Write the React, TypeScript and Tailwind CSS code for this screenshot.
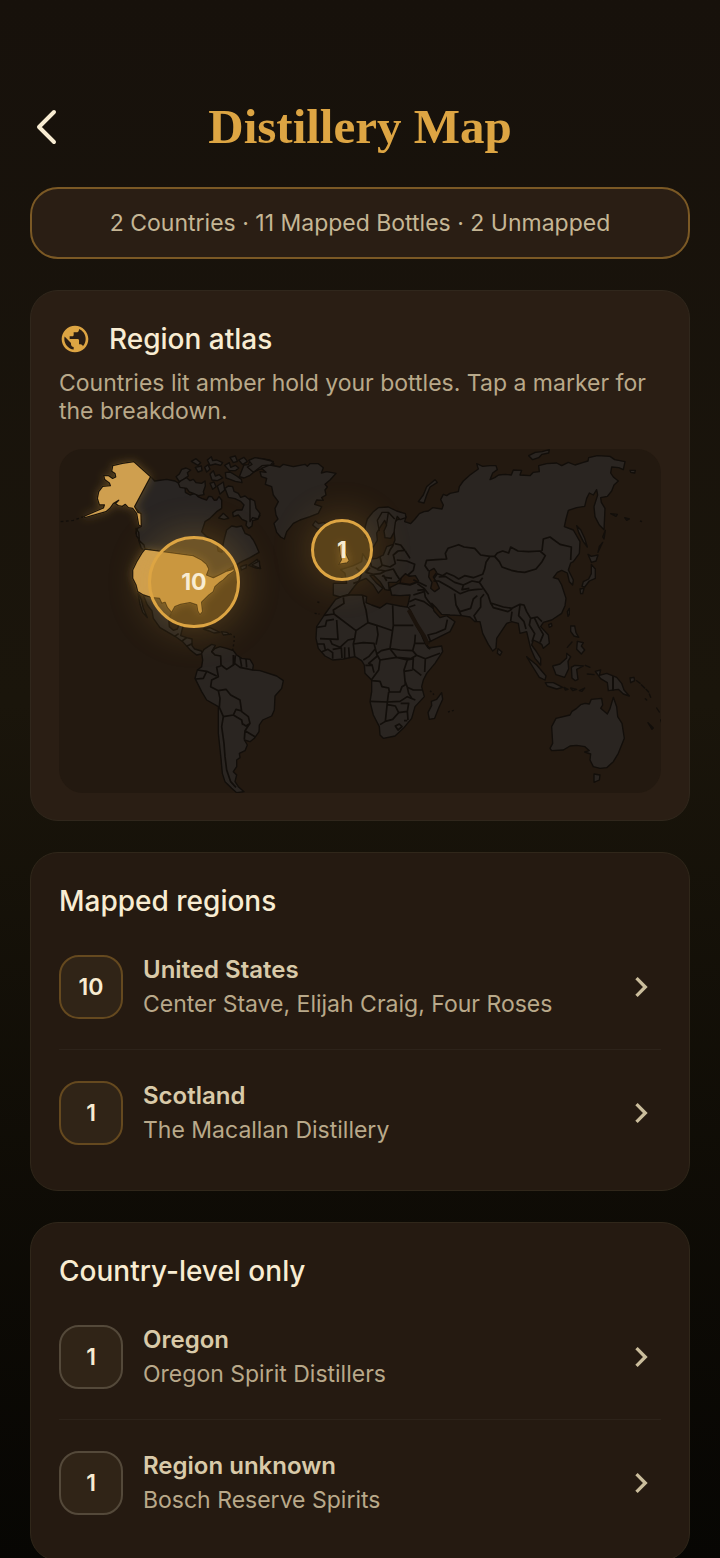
import { MdChevronRight, MdPublic } from "react-icons/md"

interface Region {
  name: string
  detail: string
  count: number
}

interface RegionListProps {
  title: string
  regions: Region[]
  badgeClassName: string
}

const mappedRegions: Region[] = [
  { name: "United States", detail: "Center Stave, Elijah Craig, Four Roses", count: 10 },
  { name: "Scotland", detail: "The Macallan Distillery", count: 1 },
]

const countryLevelRegions: Region[] = [
  { name: "Oregon", detail: "Oregon Spirit Distillers", count: 1 },
  { name: "Region unknown", detail: "Bosch Reserve Spirits", count: 1 },
]

function WorldMap() {
  return (
    <svg viewBox="-3 12 1806 1032" className="block size-full" role="img" aria-label="World map">
      <defs>
        <filter id="lit" x="-30%" y="-30%" width="160%" height="160%">
          <feDropShadow dx="0" dy="0" stdDeviation="12" floodColor="#d9a441" floodOpacity="0.3" />
        </filter>
      </defs>

      <g fill="#2a2521" stroke="#120e0a" strokeWidth="4" strokeLinejoin="round">
        {/* Canada */}
        <path
          fill="#292523"
          d="M272 95 284 108 320 103 345 108 360 117 375 122 376 142 390 150 405 145 414 155 425 160 440 165 446 154 455 155 463 166 470 165 477 155 485 165 485 190 470 200 450 220 435 230 425 260 440 275 470 290 474 318 486 322 489 300 492 285 500 255 515 243 530 246 545 243 555 265 570 272 580 285 590 305 597 322 570 338 545 350 525 362 497 378 478 392 445 398 430 360 400 345 255 312 240 290 228 265 232 250 243 245 241 206 224 185Z"
        />
        <path d="M228 250 236 262 238 282 230 274ZM236 285 252 300 256 318 244 310Z" />
        {/* Arctic islands */}
        <g transform="translate(330 15)">
          <path d="M25 100 35 88 50 83 60 92 70 88 78 98 95 100 105 93 106 108 100 125 102 134 85 137 70 130 58 126 50 115 30 112Z" />
          <path d="M18 80 28 72 35 58 48 54 62 60 52 68 55 78 40 88 28 95Z" />
          <path d="M64 34 78 26 92 38 84 46 74 40ZM76 52 94 48 96 62 84 66ZM104 52 114 44 120 58 110 66ZM112 30 124 20 128 32 140 30 158 38 152 46 136 42 120 46ZM120 72 130 62 136 78 148 74 158 84 142 92 126 90ZM120 100 132 96 138 110 128 118ZM142 108 160 96 164 120 150 132ZM164 46 178 38 182 52 196 46 206 54 196 62 178 62ZM166 68 180 66 200 78 214 88 216 98 196 94 180 88 168 84ZM180 22 196 18 202 34 190 38ZM206 30 222 22 232 34 218 44Z" />
          <path d="M215 62 222 45 236 44 240 30 262 25 300 30 312 42 290 54 268 58 252 66 240 76 222 84 208 80Z" />
          <path d="M165 115 175 108 188 110 192 124 205 130 212 142 225 138 240 150 250 165 246 180 258 194 270 196 262 208 248 212 246 228 236 235 228 226 230 214 216 208 205 195 190 200 188 188 200 180 216 180 222 165 212 154 195 146 175 142Z" />
          <path d="M146 204 160 190 176 205 162 208ZM236 346 262 328 272 356 258 354ZM212 350 230 344 228 354 214 360Z" />
        </g>
        {/* Mexico, Central America, Caribbean */}
        <path d="M250 450 275 458 298 460 305 475 315 472 322 485 335 503 326 520 328 545 340 556 352 552 358 538 370 538 366 555 362 572 380 578 396 582 396 602 404 612 424 618 428 626 410 630 390 614 370 592 345 574 300 548 280 520 276 498 262 480Z" />
        <path d="M234 442 244 464 250 490 262 518 248 502 240 478Z" />
        <path d="M430 552 450 548 480 562 462 564 448 558ZM484 560 500 562 508 568 490 570Z" />
        <path fill="none" strokeDasharray="6 7" d="M510 566 523 575 522 592 518 615" />
        <path fill="none" strokeWidth="5" d="M344 574 356 566M366 588 380 578M380 604 396 596" />

        {/* South America */}
        <g transform="translate(0 495)">
          <path d="M425 130 432 118 455 103 466 106 455 125 464 116 480 110 500 115 520 122 530 135 545 145 570 148 580 165 578 180 600 182 650 198 670 212 665 235 645 258 643 300 635 318 608 330 598 345 597 365 583 385 570 395 553 390 562 405 555 422 538 430 540 443 530 450 530 470 520 485 530 495 525 515 535 530 552 545 530 548 515 535 495 515 487 490 483 445 475 370 475 290 440 270 425 245 405 205 412 180 425 170 428 150Z" />
          <path
            fill="none"
            strokeWidth="5"
            d="M455 125 465 135 482 138 483 165 500 178 520 165 520 135M482 168 470 172 475 200 455 210 452 230 475 242 498 238 512 255 540 270 545 305 565 320 570 340 558 348 545 340M413 180 440 184 430 205 408 207M440 184 470 198M475 242 480 265 478 292 490 320 520 315 528 298 545 303M490 320 485 350 492 400 495 440 500 480 512 515 528 532M520 315 545 330 548 345M570 340 555 362 553 388M555 362 585 380M526 136 524 160 540 172 578 180M540 142 545 170M558 147 560 172M500 178 524 162"
          />
        </g>

        {/* Greenland, Iceland */}
        <g transform="translate(570 0)">
          <path d="M30 80 48 82 34 70 60 60 90 66 100 58 130 65 165 58 172 64 180 56 205 56 220 68 214 84 230 80 258 85 240 105 225 118 232 126 225 135 228 150 215 158 220 166 200 165 194 178 215 185 205 205 180 215 150 225 130 235 110 260 103 282 92 276 80 262 72 235 84 222 78 210 75 190 85 170 70 150 65 125 46 118 50 100 34 95Z" />
          <path d="M-8 66 6 58-4 46 15 38 40 42 70 50 62 60 36 62 10 82Z" />
          <path d="M188 240 196 228 206 236 222 232 232 242 218 252 202 252Z" />
          <path d="M0 160 14 168 18 190 30 205 24 222 8 218 0 230ZM5 360 28 348 30 370Z" />
          <path d="M505 170 520 150 530 125 555 104 562 112 540 126 530 150 522 174Z" />
        </g>

        {/* Eurasia */}
        <path d="M1038 215 1034 230 1052 236 1065 222 1078 206 1092 200 1105 198 1118 188 1146 192 1150 180 1142 164 1150 148 1160 152 1170 145 1195 140 1198 125 1210 108 1230 90 1255 72 1250 56 1268 64 1290 62 1308 62 1312 74 1298 84 1290 104 1304 98 1316 90 1335 88 1354 90 1360 75 1385 76 1380 90 1410 92 1420 82 1438 80 1436 62 1460 56 1490 54 1505 62 1525 52 1545 60 1570 52 1584 48 1586 38 1612 32 1650 34 1664 44 1695 50 1690 74 1676 68 1655 66 1652 84 1660 96 1675 108 1662 120 1655 138 1642 154 1622 158 1624 172 1635 190 1632 254 1618 240 1605 215 1602 185 1613 150 1610 134 1600 150 1588 144 1580 160 1574 184 1550 188 1525 196 1518 222 1513 245 1540 255 1560 290 1558 325 1540 350 1532 354 1525 375 1540 405 1538 420 1528 410 1522 384 1505 376 1492 382 1480 398 1495 402 1505 420 1518 460 1515 482 1505 505 1475 525 1450 532 1442 545 1465 570 1468 595 1450 610 1445 598 1435 592 1420 585 1415 600 1428 618 1442 640 1442 660 1425 640 1412 610 1400 560 1380 565 1375 535 1355 530 1340 535 1310 580 1308 610 1298 618 1285 598 1268 565 1260 530 1245 530 1230 516 1205 512 1170 510 1145 508 1130 490 1115 475 1122 498 1140 518 1160 512 1185 530 1170 560 1105 592 1092 575 1065 525 1040 490 1045 475 1050 450 1020 452 995 450 990 428 1015 415 1050 420 1072 412 1060 395 1040 392 1024 400 1010 412 985 412 988 436 975 434 960 410 940 390 930 392 950 415 968 430 955 444 940 420 918 400 895 410 882 426 865 448 840 456 820 450 820 415 860 415 855 385 842 374 880 362 905 350 908 326 920 344 950 340 970 330 980 305 1000 298 1005 285 1000 240 1010 225Z" />
        <path d="M915 248 922 222 940 200 955 188 985 186 1010 198 1036 206 1038 218 1020 224 1012 214 1006 232 1002 262 992 280 975 278 972 258 980 240 974 226 962 244 950 264 952 286 940 306 930 302 926 282 915 276Z" />
        <path fill="none" d="M958 258 952 226 966 202 985 202 980 236M985 202 1004 222" />
        <path
          fill="#261a10"
          d="M1108 378 1122 370 1130 382 1120 396 1130 412 1138 430 1124 440 1112 430 1116 412 1106 396ZM1024 398 1036 386 1048 394 1066 392 1076 408 1050 418 1020 414Z"
        />
        <path
          fill="none"
          strokeWidth="5"
          d="M1106 378 1095 362 1100 346 1130 344 1160 342 1156 325 1164 310 1196 299 1212 306 1244 310 1262 330 1290 334 1278 352 1274 372 1268 388 1240 398 1214 392 1196 402 1180 392 1160 384 1148 392 1132 386 1122 400M1304 334 1312 324 1328 318 1346 324 1352 306 1374 318 1406 320 1440 318 1456 332 1446 350 1428 372 1394 382 1372 380 1354 376 1326 366 1318 350 1304 334 1290 334M1446 318 1450 282 1470 276 1500 298 1534 306 1532 345M1268 398 1258 412 1270 430 1284 450 1292 474 1330 486 1356 490 1380 478 1392 480 1400 500M1292 474 1300 488 1344 500 1356 492M1356 500 1352 528M1380 480 1376 512 1392 530 1398 552M1400 500 1412 520 1408 540 1424 566 1416 590M1412 520 1432 516 1446 530M1424 520 1436 545 1450 568 1440 592M1120 408 1136 408 1168 426 1200 446 1228 436 1244 434 1268 432M1136 396 1156 394 1184 412 1210 420 1236 408 1258 412M1210 420 1206 434 1228 430M1184 446 1188 480 1200 500 1232 490 1240 462 1252 452M1188 480 1204 512M1250 530 1242 512 1262 486 1262 460 1272 448M1072 416 1092 430 1106 448M1060 404 1100 424M1072 436 1092 434 1096 456 1106 470 1120 486M1060 450 1092 440M1048 470 1066 462 1092 470 1120 490M1048 486 1066 480M1112 590 1104 570 1128 564 1156 552 1162 524"
        />
        <path
          fill="none"
          strokeWidth="5"
          d="M1000 300 990 315 984 330M960 336 966 360 990 366 1006 356 1000 330 1014 318 1034 316 1022 300 1004 296M1010 345 1040 348 1064 358 1060 376 1044 390M930 345 934 364 952 372 966 362M952 374 976 378 1000 372 1010 390 1018 402M930 368 918 382 940 388 960 386 976 378M970 390 980 408M996 400 980 398 966 392M1036 318 1050 340M880 415 896 410 905 385 888 368"
        />

        {/* Islands of north and east Asia */}
        <g transform="translate(1170 0)">
          <path d="M236 32 256 22 276 20 298 14 296 24 276 28 266 38 248 44ZM540 76 556 76 554 84 542 82ZM380 242 392 254 404 280 412 306 400 290 386 262ZM414 328 424 334 444 330 438 348 424 352 420 342ZM424 358 436 372 436 400 418 408 404 426 396 424 400 410 416 402 424 386ZM390 432 402 430 398 446 392 446ZM352 500 358 490 358 508 354 514Z" />
          <path d="M466 256 462 282 458 276ZM458 292 444 322 448 304ZM482 206 502 208 498 214ZM524 218 538 222 530 226ZM570 228 576 230" />
        </g>

        {/* Africa */}
        <g transform="translate(720 435)">
          <path d="M107 28 125 20 150 15 185 15 200 20 198 38 215 45 240 54 260 40 300 48 325 52 335 70 345 100 362 130 375 160 385 174 425 168 428 185 405 220 380 250 370 270 365 290 373 320 345 350 335 385 310 415 285 438 250 445 240 435 238 410 220 375 210 335 215 305 215 270 195 250 193 225 185 212 165 200 130 207 98 210 75 198 55 175 48 145 50 110 75 72Z" />
          <path
            fill="none"
            strokeWidth="5"
            d="M130 22 132 40 100 60 102 72 72 76M102 72 168 122 204 98 198 60 192 40 188 16M50 112 76 108 80 92 102 88M110 90 114 148 60 146M168 122 164 146 144 150 120 172 96 162 90 148M204 98 230 106 278 122M278 46 280 106 340 106M280 106 270 176 290 202 240 210 230 192 244 182 270 176M230 106 234 134 228 164M164 146 160 162 190 158 222 160 226 176 206 200 190 210M160 162 164 198M52 162 72 162 76 180M64 186 84 178 98 188 98 206M98 178 124 174 126 204M134 172 134 204M146 172 148 202M226 176 232 198 206 220 216 224 222 248M196 226 218 226M240 210 236 240 214 270M216 272 240 274 246 290 266 294 268 306 300 306 306 290 316 284 312 240 322 210 290 202M270 176 300 180 338 182 344 160 346 134M290 202 332 206 350 196 376 206 420 190M350 196 338 182M344 160 376 160 390 178M322 210 340 206 338 236 364 256M376 206 374 246M312 244 338 240M314 270 322 292 340 300 368 300M210 334 262 336 266 306M262 336 300 334 322 320 346 330M322 292 326 310 336 326M262 338 256 394 240 404M256 394 278 388 296 368 322 364 326 340 302 340M296 368 286 348 262 344M322 364 324 390M286 408 298 402 306 410 294 420ZM312 392 322 392"
          />
          <path d="M425 308 428 328 416 354 404 385 388 388 384 368 395 346 394 334 410 328Z" />
          <path fill="none" strokeDasharray="6 6" d="M390 302 402 314M444 366 466 360M44 70 58 72M52 36 60 38" />
          <path fill="none" strokeWidth="12" stroke="#1b130c" d="M326 60 350 104 372 138 384 164" />
        </g>

        {/* South-east Asia and Oceania */}
        <g transform="translate(1230 435)">
          <path d="M240 475 248 460 245 410 258 385 300 375 306 364 320 355 332 344 345 340 358 342 364 328 395 325 398 345 392 355 412 372 420 356 430 322 440 350 443 380 456 400 463 445 445 490 430 515 410 533 390 535 370 530 360 510 362 492 344 486 358 482 345 470 320 466 300 468 280 480 245 482Z" />
          <path d="M372 552 390 555 388 570 372 577Z" />
          <path d="M376 244 392 240 388 256 410 250 440 262 455 280 462 300 478 318 460 312 445 298 415 302 412 278 392 266Z" />
          <path strokeWidth="6" d="M429 258V302" />
          <path d="M248 228 270 222 290 204 290 190 302 200 294 214 296 236 284 262 258 254ZM170 200 200 225 228 258 225 270 208 262 185 225ZM226 278 250 278 278 292 260 297 232 288ZM304 232 314 226 340 228 320 238 324 268 316 272 306 264ZM302 108 314 108 318 128 326 142 312 138 302 124ZM322 154 340 158 334 168 344 180 334 192 320 178ZM292 172 306 156ZM84 176 96 186 90 196 82 190ZM236 104 244 100 246 108 238 112ZM346 226 360 232ZM352 252 372 254ZM480 264 492 262 494 272 482 278ZM534 398 550 414 546 418Z" />
          <path d="M282 292 294 298 286 300ZM302 294 320 298 308 302ZM328 302 344 294 336 304ZM500 272 510 280ZM514 284 524 294ZM528 298 536 306ZM538 312 542 322ZM526 326 530 330ZM560 354 568 366ZM572 390 574 396Z" />
        </g>
      </g>

      {/* Countries holding bottles */}
      <g fill="#cf9f50" stroke="#1d140b" strokeWidth="4" strokeLinejoin="round" filter="url(#lit)">
        <path d="M71 214 130 189 133 180 118 180 112 160 116 140 128 124 151 122 148 114 134 104 131 92 145 91 158 100 167 96 165 86 155 79 158 62 187 55 222 50 272 95 224 185 234 202 243 205 244 245 236 240 230 206 218 190 205 188 196 178 187 184 175 182 166 176 176 166 160 176 150 190 138 200 75 218Z" />
        <path d="M245 325 255 312 400 332 425 345 440 358 447 372 440 390 460 398 480 388 500 378 516 374 520 364 523 378 505 390 490 405 480 412 465 425 460 440 447 450 425 472 428 500 420 510 413 498 410 480 390 473 362 478 345 485 335 503 322 488 315 472 305 475 298 460 275 458 250 450 233 440 228 420 218 400 218 375 230 350Z" />
        <path d="M838 300 848 296 850 310 858 326 868 346 862 354 836 358 844 344 840 328Z" />
      </g>
      <path fill="none" stroke="#120e0a" strokeWidth="4" strokeDasharray="8 8" d="M2 230 40 226 68 216" />
    </svg>
  )
}

function RegionList({ title, regions, badgeClassName }: RegionListProps) {
  return (
    <section className="rounded-[28px] border border-[#30271a] bg-[#251a11] px-7 pt-7 pb-[15px]">
      <h2 className="mb-[3px] text-[28px] leading-10 font-medium text-[#f8ecd2]">{title}</h2>
      <ul className="divide-y divide-[#2d231a]">
        {regions.map((region) => (
          <li key={region.name}>
            <button type="button" className="flex w-full items-center pt-[31px] pb-[30px] text-left">
              <span
                className={`flex size-16 shrink-0 items-center justify-center rounded-[20px] border-2 bg-[#302417] text-[23px] font-semibold text-[#f8ecd2] ${badgeClassName}`}
              >
                {region.count}
              </span>
              <span className="-my-1 ml-5 min-w-0 flex-1">
                <span className="block text-[24px] leading-[34px] font-semibold text-[#d9caa9]">{region.name}</span>
                <span className="block truncate text-[23px] leading-[34px] text-[#b9a98a]">{region.detail}</span>
              </span>
              <MdChevronRight className="size-10 shrink-0 text-[#cbbd9c]" />
            </button>
          </li>
        ))}
      </ul>
    </section>
  )
}

export default function App() {
  return (
    <main className="min-h-screen bg-linear-to-b from-[#17110b] via-[#1a150b] via-45% to-[#070603] px-[30px] pt-[92px] font-['Inter','Liberation_Sans',sans-serif]">
      <header className="grid h-[70px] grid-cols-[48px_1fr_48px] items-center">
        <button type="button" aria-label="Back" className="flex size-12 items-center">
          <svg
            viewBox="0 0 32 40"
            className="h-10 w-8"
            fill="none"
            stroke="#f8ecd2"
            strokeWidth="4"
            strokeLinecap="round"
            strokeLinejoin="round"
          >
            <path d="M24 5 9 20 24 35" />
          </svg>
        </button>
        <h1 className="text-center font-['Liberation_Serif',serif] text-[49px] leading-[56px] font-bold text-[#dda543]">
          Distillery Map
        </h1>
      </header>

      <div className="mt-[25px] flex flex-col gap-[31px]">
        <p className="rounded-[28px] border-2 border-[#7b5925] bg-[#2a1e14] px-7 py-[17px] text-center text-[23px] leading-[34px] text-[#c5b695]">
          2 Countries · 11 Mapped Bottles · 2 Unmapped
        </p>

        <section className="rounded-[28px] border border-[#30271c] bg-[#2a1e14] px-7 pt-7 pb-[27px]">
          <div className="flex items-center gap-[18px]">
            <MdPublic className="size-8 text-[#dda543]" />
            <h2 className="text-[28px] leading-10 font-medium text-[#f8ecd2]">Region atlas</h2>
          </div>
          <p className="mt-2.5 text-[23px] leading-7 text-[#b9a98a]">
            Countries lit amber hold your bottles. Tap a marker for the breakdown.
          </p>
          <div className="relative mt-6 aspect-[602/344] overflow-hidden rounded-[24px] bg-[#231910]">
            <WorldMap />
            <button
              type="button"
              aria-label="United States, 10 bottles"
              className="absolute top-[38.6%] left-[22.4%] flex size-[92px] -translate-1/2 items-center justify-center rounded-full border-[3px] border-[#dda543] bg-[#c48e2c]/45 text-[23px] font-bold text-[#f8ecd2] shadow-[0_0_36px_4px_rgba(217,164,65,0.25)]"
            >
              10
            </button>
            <button
              type="button"
              aria-label="Scotland, 1 bottle"
              className="absolute top-[29.4%] left-[47%] flex size-[62px] -translate-1/2 items-center justify-center rounded-full border-[3px] border-[#dda543] bg-[#c48e2c]/35 text-[23px] font-bold text-[#f8ecd2] shadow-[0_0_36px_4px_rgba(217,164,65,0.22)]"
            >
              1
            </button>
          </div>
        </section>

        <RegionList title="Mapped regions" regions={mappedRegions} badgeClassName="border-[#65491f]" />
        <RegionList title="Country-level only" regions={countryLevelRegions} badgeClassName="border-[#54493a]" />
      </div>
    </main>
  )
}
